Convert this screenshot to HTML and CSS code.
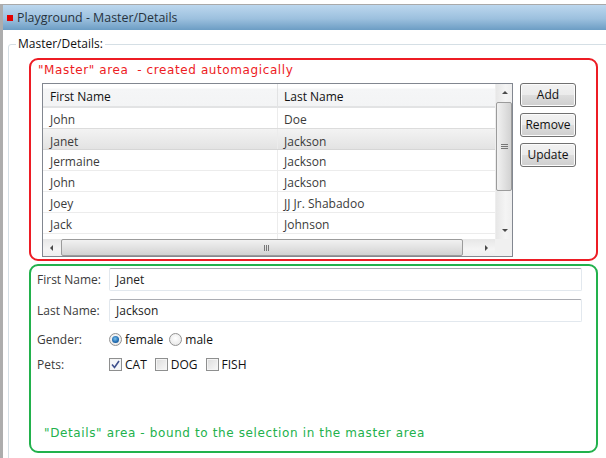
FILE: index.html
```html
<!DOCTYPE html>
<html>
<head>
<meta charset="utf-8">
<title>Playground - Master/Details</title>
<link rel="stylesheet" href="styles.css">
</head>
<body>
<div class="window">
  <div class="titlebar">
    <span class="app-icon"></span>
    <span class="title">Playground - Master/Details</span>
  </div>
  <div class="client">
    <fieldset class="group">
      <legend>Master/Details:</legend>
      <div class="group-body">
        <section class="master">
          <div class="note note-red">"Master" area&nbsp; - created automagically</div>
          <div class="master-body">
            <div class="table">
              <div class="table-main">
                <div class="grid">
                  <div class="row head"><div class="cell c1">First Name</div><div class="cell c2">Last Name</div></div>
                  <div class="row"><div class="cell c1">John</div><div class="cell c2">Doe</div></div>
                  <div class="row selected"><div class="cell c1">Janet</div><div class="cell c2">Jackson</div></div>
                  <div class="row"><div class="cell c1">Jermaine</div><div class="cell c2">Jackson</div></div>
                  <div class="row"><div class="cell c1">John</div><div class="cell c2">Jackson</div></div>
                  <div class="row"><div class="cell c1">Joey</div><div class="cell c2">JJ Jr. Shabadoo</div></div>
                  <div class="row"><div class="cell c1">Jack</div><div class="cell c2">Johnson</div></div>
                  <div class="row empty"><div class="cell c1"></div><div class="cell c2"></div></div>
                </div>
                <div class="vscroll">
                  <div class="sb-btn"><span class="arrow up"></span></div>
                  <div class="v-track">
                    <div class="v-thumb"><span class="grip-v"></span></div>
                  </div>
                  <div class="sb-btn"><span class="arrow down"></span></div>
                </div>
              </div>
              <div class="hscroll">
                <div class="sb-btn"><span class="arrow left"></span></div>
                <div class="h-track">
                  <div class="h-thumb"><span class="grip-h"></span></div>
                </div>
                <div class="sb-btn"><span class="arrow right"></span></div>
                <div class="corner"></div>
              </div>
            </div>
            <div class="buttons">
              <button class="btn">Add</button>
              <button class="btn">Remove</button>
              <button class="btn">Update</button>
            </div>
          </div>
        </section>
        <section class="details">
          <div class="form-row">
            <label class="lbl">First Name:</label>
            <div class="input">Janet</div>
          </div>
          <div class="form-row">
            <label class="lbl">Last Name:</label>
            <div class="input">Jackson</div>
          </div>
          <div class="form-row opt-row gender">
            <span class="lbl">Gender:</span>
            <span class="opt"><span class="radio checked"></span>female</span>
            <span class="opt"><span class="radio"></span>male</span>
          </div>
          <div class="form-row opt-row pets">
            <span class="lbl">Pets:</span>
            <span class="opt"><span class="check checked"><svg width="9" height="9" viewBox="0 0 9 9"><path d="M1 4.5 L3.5 7.5 L8 1" fill="none" stroke="#3d4f8c" stroke-width="1.6"/></svg></span>CAT</span>
            <span class="opt"><span class="check"></span>DOG</span>
            <span class="opt"><span class="check"></span>FISH</span>
          </div>
          <div class="spacer"></div>
          <div class="note note-green">"Details" area - bound to the selection in the master area</div>
        </section>
      </div>
    </fieldset>
  </div>
</div>
</body>
</html>
```

FILE: styles.css
```css
* { box-sizing: border-box; }

html, body {
  margin: 0;
  padding: 0;
  background: #ffffff;
}

body {
  width: 606px;
  height: 458px;
  overflow: hidden;
  font-family: "Open Sans", "Noto Sans", sans-serif;
  font-size: 12px;
  color: #222;
}

.window {
  margin-top: 4px;
  height: 454px;
  border-top: 1px solid #a9a9a9;
  border-left: 3px solid #adadad;
  display: flex;
  flex-direction: column;
}

.titlebar {
  height: 25px;
  flex: none;
  display: flex;
  align-items: center;
  padding-left: 4px;
  background: linear-gradient(#bcd7ee, #9cc0de 55%, #6c9dc4);
}

.app-icon {
  width: 6px;
  height: 6px;
  background: #e30000;
  margin-right: 4px;
}

.title {
  font-size: 12.4px;
  color: #26323d;
  line-height: 16px;
}

.client {
  flex: 1;
  padding: 6px 0 0 5px;
  overflow: hidden;
}

.group {
  margin: 0 -12px 0 0;
  padding: 0;
  border: 1px solid #d5dfe5;
  border-radius: 3px;
  height: 430px;
}

.group legend {
  margin-left: 7px;
  padding: 0 2px;
  line-height: 16px;
  font-size: 12px;
  color: #111;
}

.group-body {
  padding: 6px 0 0 20px;
  display: flex;
  flex-direction: column;
  gap: 3px;
}

/* red master area */
.master {
  width: 569px;
  height: 203px;
  border: 2px solid #ed1c24;
  border-radius: 9px;
  padding: 2px 0 0 0;
}

.note {
  font-family: "DejaVu Sans", sans-serif;
  font-size: 12px;
  letter-spacing: 0.5px;
  line-height: 16px;
}

.note-red {
  color: #ed1c24;
  padding-left: 7px;
  letter-spacing: 0.6px;
}

.note-green {
  color: #22b14c;
  padding-left: 7px;
  letter-spacing: 0.62px;
}

.master-body {
  display: flex;
  align-items: flex-start;
  margin-top: 5px;
  padding-left: 11px;
}

.table {
  width: 471px;
  height: 174px;
  border: 1px solid #828790;
  display: flex;
  flex-direction: column;
  background: #fff;
}

.table-main {
  flex: 1;
  display: flex;
  overflow: hidden;
}

.grid {
  width: 452px;
  overflow: hidden;
  color: #3b3b3b;
}

.row {
  display: flex;
  height: 21px;
  border-bottom: 1px solid #ececec;
  line-height: 23px;
}

.row.head {
  height: 24px;
  line-height: 25px;
  color: #111;
  background: linear-gradient(#ffffff 0, #ffffff 4px, #f5f6f7 5px, #f3f4f5 100%);
  border-bottom: 2px solid #e2e3e4;
}

.row.selected {
  background: linear-gradient(#f3f3f3, #e3e3e3);
  border-top: 1px solid #dcdcdc;
  margin-top: -1px;
  height: 22px;
  line-height: 25px;
  border-bottom-color: #d6d6d6;
}

.cell {
  white-space: nowrap;
  overflow: hidden;
}

.c1 {
  width: 235px;
  padding-left: 7px;
  border-right: 1px solid #ececec;
}

.head .c1 { border-right-color: #e2e3e4; }

.c2 {
  flex: 1;
  padding-left: 6px;
}

/* scrollbars */
.vscroll {
  width: 17px;
  display: flex;
  flex-direction: column;
  background: linear-gradient(90deg, #e7e7e7, #f4f4f4 60%, #eeeeee);
  border-left: 1px solid #eeeeee;
}

.sb-btn {
  width: 17px;
  height: 17px;
  flex: none;
  display: flex;
  align-items: center;
  justify-content: center;
}

.v-track {
  flex: 1;
  padding: 1px 0;
  display: flex;
  flex-direction: column;
}

.v-thumb {
  height: 89px;
  border: 1px solid #9b9b9b;
  border-radius: 2px;
  background: linear-gradient(90deg, #f1f1f1, #e2e2e2 50%, #d2d2d2);
  display: flex;
  align-items: center;
  justify-content: center;
}

.grip-v {
  width: 7px;
  height: 5px;
  border-top: 1px solid #777;
  border-bottom: 1px solid #777;
  position: relative;
}

.grip-v::after {
  content: "";
  position: absolute;
  left: 0;
  right: 0;
  top: 1px;
  border-top: 1px solid #777;
}

.hscroll {
  height: 17px;
  flex: none;
  display: flex;
  background: linear-gradient(#e7e7e7, #f4f4f4 60%, #eeeeee);
}

.h-track {
  flex: 1;
  padding: 0 1px;
  display: flex;
}

.h-thumb {
  width: 402px;
  border: 1px solid #9b9b9b;
  border-radius: 2px;
  background: linear-gradient(#f1f1f1, #e2e2e2 50%, #d2d2d2);
  display: flex;
  align-items: center;
  justify-content: center;
  padding-left: 8px;
}

.grip-h {
  width: 5px;
  height: 6px;
  border-left: 1px solid #777;
  border-right: 1px solid #777;
  position: relative;
}

.grip-h::after {
  content: "";
  position: absolute;
  top: 0;
  bottom: 0;
  left: 1px;
  border-left: 1px solid #777;
}

.corner {
  width: 17px;
  background: #f0f0f0;
}

.arrow {
  width: 0;
  height: 0;
  border: 3px solid transparent;
}

.arrow.up { border-bottom: 3px solid #4a4a4a; border-top-width: 0; }
.arrow.down { border-top: 3px solid #4a4a4a; border-bottom-width: 0; }
.arrow.left { border-right: 3px solid #4a4a4a; border-left-width: 0; }
.arrow.right { border-left: 3px solid #4a4a4a; border-right-width: 0; }

/* buttons */
.buttons {
  display: flex;
  flex-direction: column;
  gap: 6px;
  margin-left: 7px;
}

.btn {
  width: 56px;
  height: 24px;
  padding: 0;
  border: 1px solid #707070;
  border-radius: 3px;
  background: linear-gradient(#f2f2f2, #ebebeb 50%, #dddddd 51%, #cfcfcf);
  box-shadow: inset 0 0 0 1px #fcfcfc;
  font-family: "Open Sans", "Noto Sans", sans-serif;
  font-size: 12px;
  color: #111;
  line-height: 20px;
}

/* green details area */
.details {
  width: 569px;
  height: 189px;
  border: 2px solid #22b14c;
  border-radius: 9px;
  padding: 2px 14px 10px 6px;
  display: flex;
  flex-direction: column;
  color: #3b3b3b;
}

.form-row {
  display: flex;
  align-items: center;
}

.form-row + .form-row { margin-top: 8px; }

.lbl {
  width: 72px;
  flex: none;
}

.input {
  flex: 1;
  height: 23px;
  border: 1px solid #e2e8ee;
  border-top-color: #abadb3;
  border-radius: 2px;
  padding-left: 6px;
  line-height: 21px;
  color: #222;
}

.opt-row { height: 16px; }
.form-row.gender { margin-top: 9px; }
.form-row.pets { margin-top: 9px; }

.opt {
  display: inline-flex;
  align-items: center;
  margin-right: 6px;
  color: #111;
}

.pets .opt { margin-right: 8px; }

.radio {
  width: 13px;
  height: 13px;
  border-radius: 50%;
  border: 1px solid #929292;
  background: radial-gradient(circle at 50% 40%, #ffffff, #e2e2e2);
  margin-right: 3px;
  position: relative;
}

.radio.checked::after {
  content: "";
  position: absolute;
  left: 2px;
  top: 2px;
  width: 7px;
  height: 7px;
  border-radius: 50%;
  background: radial-gradient(circle at 45% 40%, #7cc3ee, #1d67ad 60%, #0b457f);
}

.check {
  width: 13px;
  height: 13px;
  border: 1px solid #8e8f8f;
  background: linear-gradient(135deg, #dcdcdc, #f8f8f8);
  box-shadow: inset 0 0 0 1px #f4f4f4;
  margin-right: 3px;
  display: flex;
  align-items: center;
  justify-content: center;
}

.check.checked { background: #f4f6f9; }

.spacer { flex: 1; }
```
